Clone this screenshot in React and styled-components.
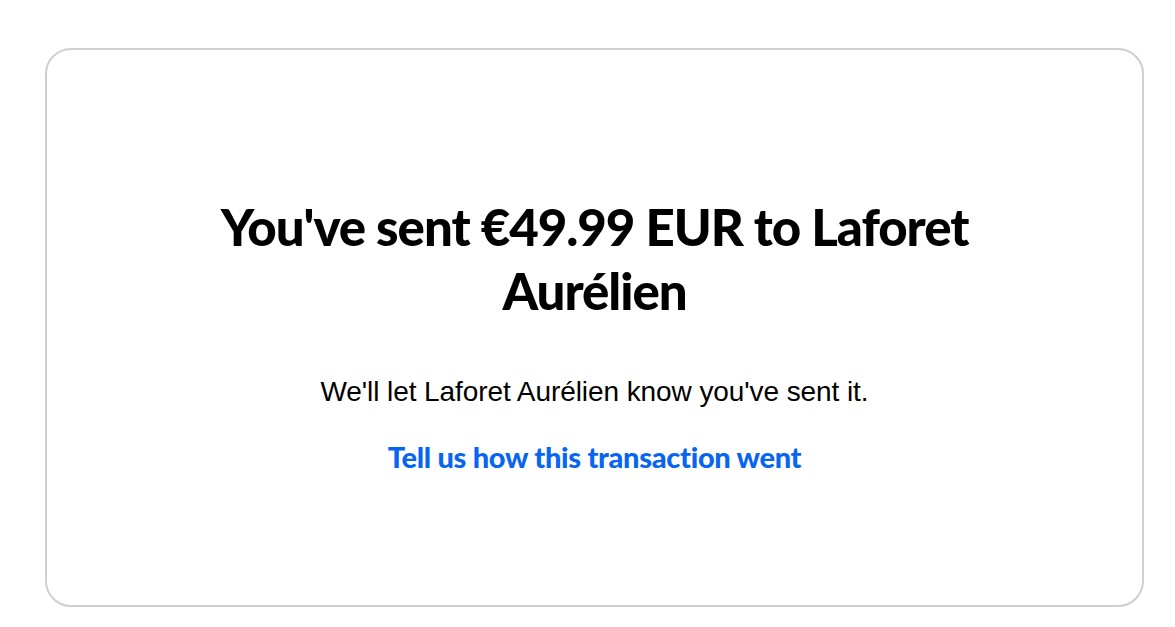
import styled, { createGlobalStyle } from 'styled-components'

const GlobalStyle = createGlobalStyle`
	html, body {
		margin: 0;
		padding: 0;
		background: #ffffff;
	}
	body {
		font-family: 'Liberation Sans', Arial, sans-serif;
		color: #000;
	}
`

const Page = styled.main`
	padding: 48px 31px 20px 45px;
`

const Card = styled.section`
	height: 559px;
	box-sizing: border-box;
	border: 2px solid #cfcfcf;
	border-radius: 26px;
	display: flex;
	flex-direction: column;
	align-items: center;
	text-align: center;
	padding: 145px 80px 0;
`

const Title = styled.h1`
	margin: 0;
	max-width: 800px;
	font-family: Lato, 'Noto Sans', sans-serif;
	font-weight: 900;
	font-size: 51px;
	line-height: 64px;
	letter-spacing: -1.05px;
	color: #000;
`

const Message = styled.p`
	margin: 53px 0 0;
	font-size: 28px;
	line-height: 32px;
	letter-spacing: -0.08px;
	color: #000;
`

const FeedbackLink = styled.a`
	margin-top: 32px;
	font-family: Lato, 'Noto Sans', sans-serif;
	font-weight: 900;
	font-size: 29px;
	line-height: 34px;
	letter-spacing: -0.3px;
	color: #0865f1;
	text-decoration: none;
	cursor: pointer;
`

const App = () => {
	return (
		<>
			<GlobalStyle />
			<Page>
				<Card>
					<Title>You've sent €49.99 EUR to Laforet Aurélien</Title>
					<Message>We'll let Laforet Aurélien know you've sent it.</Message>
					<FeedbackLink href="#">Tell us how this transaction went</FeedbackLink>
				</Card>
			</Page>
		</>
	)
}

export default App
